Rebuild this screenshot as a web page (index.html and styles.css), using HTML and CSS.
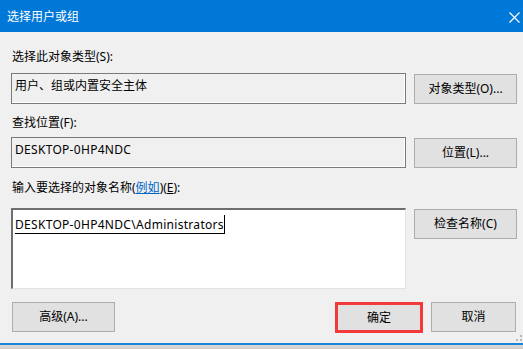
FILE: index.html
```html
<!DOCTYPE html>
<html lang="zh-CN">
<head>
<meta charset="utf-8">
<title>选择用户或组</title>
<link rel="stylesheet" href="styles.css">
</head>
<body>
<div class="dialog">
  <div class="titlebar">
    <span class="title">选择用户或组</span>
    <svg class="close" width="11" height="11" viewBox="0 0 11 11"><path d="M0.5 0.5L10.5 10.5M10.5 0.5L0.5 10.5" stroke="#fff" stroke-width="1.2" fill="none"/></svg>
  </div>
  <div class="content">
    <div class="label l1">选择此对象类型(S):</div>
    <div class="row">
      <div class="field">用户、组或内置安全主体</div>
      <div class="btn">对象类型(O)...</div>
    </div>
    <div class="label l2">查找位置(F):</div>
    <div class="row">
      <div class="field latin">DESKTOP-0HP4NDC</div>
      <div class="btn">位置(L)...</div>
    </div>
    <div class="label l3">输入要选择的对象名称(<span class="link">例如</span>)(<u>E</u>):</div>
    <div class="row">
      <div class="area"><span class="resolved latin">DESKTOP-0HP4NDC\Administrators</span><span class="caret"></span></div>
      <div class="btn">检查名称(C)</div>
    </div>
    <div class="footer">
      <div class="btn adv">高级(A)...</div>
      <div class="spacer"></div>
      <div class="btn ok">确定</div>
      <div class="btn cancel">取消</div>
    </div>
  </div>
  <div class="bottomline"></div>
  <div class="shadow"></div>
  <svg class="grip" width="6" height="6" viewBox="0 0 6 6"><rect x="4" y="0" width="2" height="2" fill="#b9b9b9"/><rect x="0" y="4" width="2" height="2" fill="#b9b9b9"/><rect x="4" y="4" width="2" height="2" fill="#b9b9b9"/></svg>
</div>
</body>
</html>
```
FILE: styles.css
```css
* { box-sizing: border-box; }
html, body { margin: 0; padding: 0; }
body {
  width: 523px;
  height: 349px;
  overflow: hidden;
  background: #f0f0f0;
  font-family: "Noto Sans", "Noto Sans CJK SC", sans-serif;
  font-size: 12px;
  color: #000;
}
.dialog {
  position: relative;
  width: 523px;
  height: 349px;
  display: flex;
  flex-direction: column;
  background: #f0f0f0;
}
.titlebar {
  height: 32px;
  flex: none;
  background: #0078d7;
  color: #fff;
  display: flex;
  align-items: center;
  justify-content: space-between;
  padding: 2px 3px 0 7px;
}
.title { line-height: 16px; }
.close { display: block; }
.content {
  flex: 1;
  padding: 0 6px 0 11px;
  display: flex;
  flex-direction: column;
}
.label { line-height: 16px; height: 16px; white-space: nowrap; padding-left: 1px; }
.l1 { margin-top: 17px; margin-bottom: 8px; }
.l2 { margin-top: 11px; margin-bottom: 6px; }
.l3 { margin-top: 12px; margin-bottom: 12px; }
.link { color: #0066cc; text-decoration: underline; }
.latin { letter-spacing: 0.3px; }
.row { display: flex; align-items: flex-start; }
.field {
  width: 395px;
  height: 31px;
  border: 1px solid #7a7a7a;
  box-shadow: inset -1px -1px 0 #fff;
  padding: 4px 0 0 3px;
  line-height: 16px;
  white-space: nowrap;
}
.btn {
  flex: none;
  width: 103px;
  height: 30px;
  margin-left: 8px;
  margin-top: 1px;
  background: #e1e1e1;
  border: 1px solid #adadad;
  display: flex;
  align-items: center;
  justify-content: center;
  white-space: nowrap;
  line-height: 16px;
}
.area {
  width: 395px;
  height: 81px;
  background: #fff;
  border-top: 2px solid #6e6e6e;
  border-left: 2px solid #6e6e6e;
  border-right: 1px solid #e3e3e3;
  border-bottom: 1px solid #e3e3e3;
  padding: 7px 0 0 2px;
  line-height: 16px;
  display: flex;
  align-items: flex-start;
}
.resolved {
  white-space: nowrap;
  border-bottom: 1px solid #000;
  padding-bottom: 0;
}
.caret {
  width: 1px;
  height: 19px;
  margin-top: -2px;
  background: #000;
}
.footer {
  display: flex;
  align-items: flex-start;
  margin-top: 13px;
}
.footer .btn { margin-top: 0; }
.adv { margin-left: 1px; width: 103px; }
.spacer { flex: 1; }
.ok {
  width: 88px;
  height: 31px;
  border: 3px solid #f33a3a;
}
.cancel { width: 85px; margin-left: 8px; margin-right: 1px; height: 30px; }
.bottomline { flex: none; height: 2px; background: #1883d7; }
.shadow { flex: none; height: 4px; background: linear-gradient(#d8d8d8, #cfcfcf); }
.grip { position: absolute; right: 1px; bottom: 8px; }
```
